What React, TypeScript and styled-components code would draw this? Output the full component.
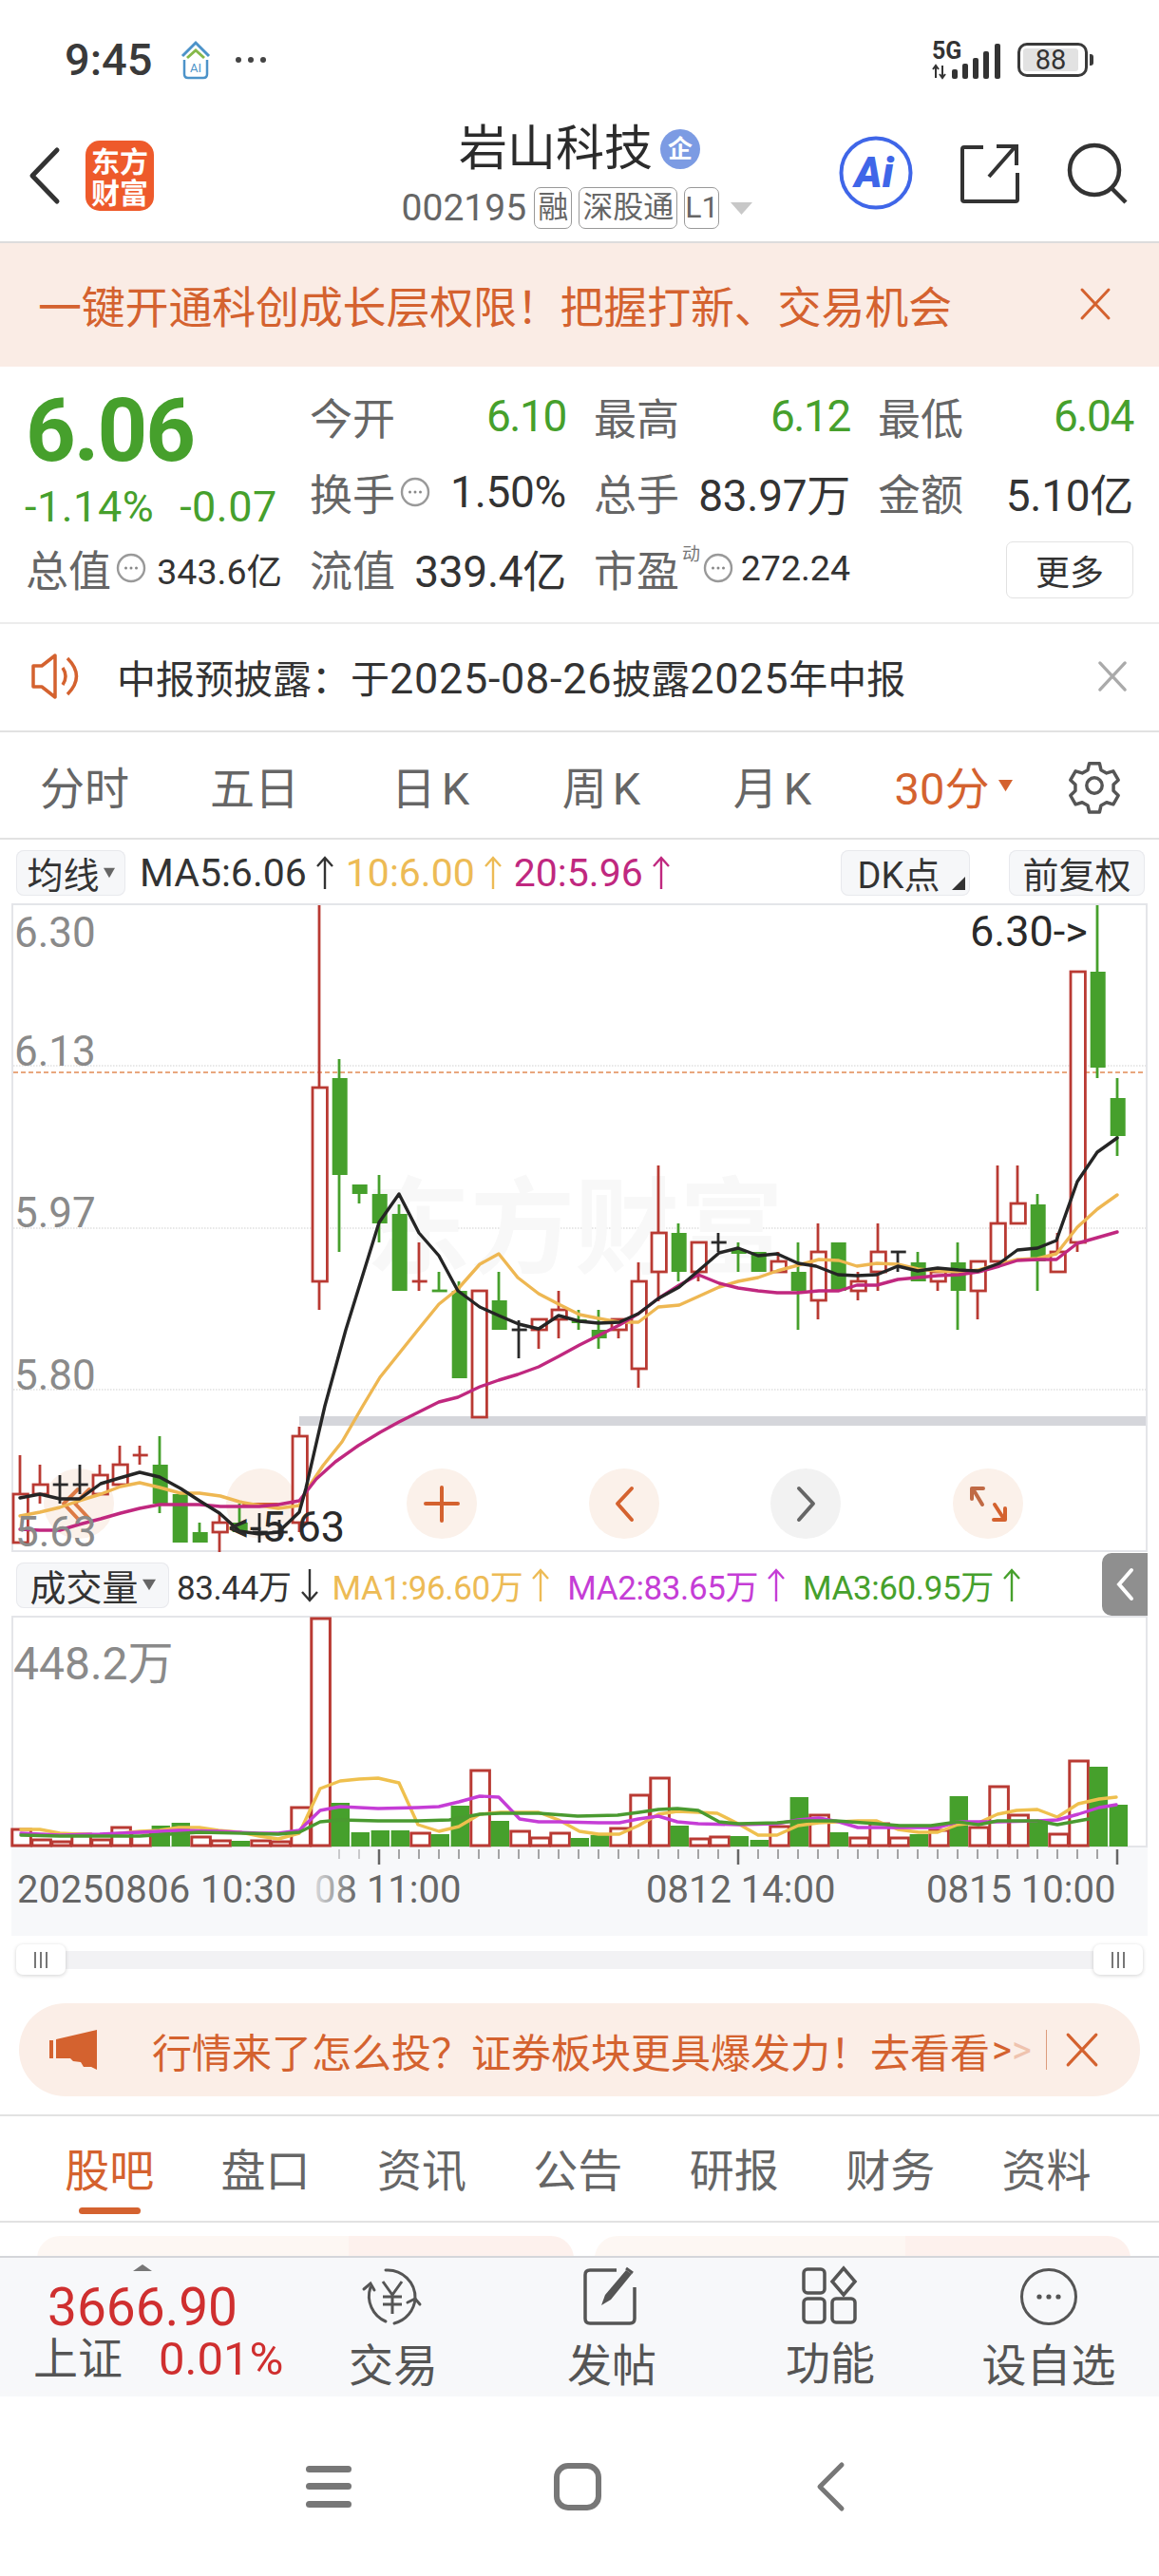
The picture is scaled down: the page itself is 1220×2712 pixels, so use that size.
import React from "react";
import styled, { createGlobalStyle } from "styled-components";

const ORANGE = "#d4622f";
const GREEN = "#46a02c";
const RED = "#b93a33";
const YELLOW = "#edbb55";
const MAGENTA = "#c0287f";
const PURPLE = "#c53dd6";

const GlobalStyle = createGlobalStyle`
  html, body {
    margin: 0;
    padding: 0;
    background: #fff;
    font-family: Roboto, "Noto Sans CJK SC", sans-serif;
  }
  * { box-sizing: border-box; }
  svg { overflow: visible; }
`;

const Page = styled.div`
  width: 1220px;
  height: 2712px;
  overflow: hidden;
  background: #fff;
  color: #333;
`;

/* status bar */
const StatusBar = styled.div`
  height: 125px;
  display: flex;
  align-items: center;
  padding: 0 75px 0 68px;
`;
const Clock = styled.span`
  font-size: 47px;
  font-weight: 500;
  line-height: 1;
  color: #3a3a3a;
  margin-right: 27px;
`;
const StatusDots = styled.svg`
  margin-left: 23px;
`;
const StatusRight = styled.div`
  margin-left: auto;
  display: flex;
  align-items: center;
  gap: 16px;
`;
const Battery = styled.div`
  width: 74px;
  height: 36px;
  border: 3px solid #3a3a3a;
  border-radius: 10px;
  padding: 3px;
  position: relative;
  &::after {
    content: "";
    position: absolute;
    right: -9px;
    top: 9px;
    width: 4px;
    height: 12px;
    border-radius: 0 3px 3px 0;
    background: #3a3a3a;
  }
`;
const BatteryFill = styled.div`
  width: 58px;
  height: 24px;
  border-radius: 3px;
  background: #e2e2e2;
  font-size: 29px;
  line-height: 24px;
  text-align: center;
  color: #333;
`;

/* header */
const Header = styled.header`
  height: 131px;
  display: grid;
  grid-template-columns: 1fr auto 1fr;
  border-bottom: 2px solid #dcdcdc;
`;
const HeaderLeft = styled.div`
  display: flex;
  align-items: center;
  gap: 26px;
  padding: 0 0 9px 30px;
`;
const Logo = styled.div`
  width: 72px;
  height: 74px;
  border-radius: 15px;
  background: #ee5a2b;
  color: #fff;
  font-size: 30px;
  font-weight: 700;
  line-height: 33px;
  text-align: center;
  padding-top: 4px;
  font-family: "Noto Sans CJK SC", sans-serif;
`;
const HeaderCenter = styled.div`
  display: flex;
  flex-direction: column;
  align-items: center;
  padding-top: 6px;
`;
const TitleRow = styled.div`
  display: flex;
  align-items: center;
  gap: 8px;
  height: 52px;
`;
const Title = styled.h1`
  margin: 0;
  font-size: 51px;
  font-weight: 400;
  line-height: 52px;
  color: #2b2b2b;
`;
const TitleBadge = styled.span`
  width: 42px;
  height: 42px;
  border-radius: 50%;
  background: #7c9be3;
  color: #fff;
  font-size: 26px;
  font-weight: 700;
  line-height: 42px;
  text-align: center;
`;
const SubRow = styled.div`
  display: flex;
  align-items: center;
  gap: 7px;
  margin-top: 14px;
  height: 44px;
  padding-right: 5px;
  & > svg {
    margin-left: 5px;
  }
`;
const StockCode = styled.span`
  font-size: 39px;
  color: #666;
  margin-right: 1px;
`;
const Tag = styled.span<{ $tight?: boolean }>`
  height: 44px;
  padding: 0 ${(p) => (p.$tight ? 0 : 3)}px;
  border: 1px solid #999;
  border-radius: 7px;
  font-size: 32px;
  line-height: 40px;
  color: #666;
`;
const HeaderRight = styled.div`
  display: flex;
  align-items: center;
  justify-content: flex-end;
  gap: 50px;
  padding: 0 33px 15px 0;
`;

/* top promo */
const TopBanner = styled.div`
  height: 130px;
  background: #faece5;
  display: flex;
  align-items: center;
  justify-content: space-between;
  padding: 0 50px 2px 40px;
  color: ${ORANGE};
  font-size: 46px;
  letter-spacing: -0.2px;
`;

/* quote */
const Quote = styled.section`
  height: 271px;
  padding: 12px 0 0 28px;
  border-bottom: 2px solid #ececec;
  display: grid;
  grid-template-columns: 269px 269px 269px 268px;
  grid-auto-rows: 80px;
  column-gap: 30px;
`;
const PriceBox = styled.div`
  grid-row: span 2;
  padding-top: 8px;
`;
const Price = styled.div`
  font-size: 92px;
  font-weight: 700;
  line-height: 96px;
  color: ${GREEN};
  letter-spacing: -2px;
  margin-left: -1px;
`;
const PriceChange = styled.div`
  display: flex;
  gap: 27px;
  margin: 7px 0 0 -2px;
  font-size: 45px;
  line-height: 50px;
  letter-spacing: 0.5px;
  color: ${GREEN};
`;
const StatCell = styled.div`
  display: flex;
  align-items: center;
  justify-content: space-between;
`;
const StatLabel = styled.span`
  font-size: 45px;
  margin-left: -1px;
  color: #666;
  white-space: nowrap;
`;
const StatValue = styled.span<{ $green?: boolean; $small?: boolean }>`
  font-size: ${(p) => (p.$small ? 37.5 : 46)}px;
  letter-spacing: ${(p) => (p.$green ? -1.4 : p.$small ? 0 : -0.3)}px;
  color: ${(p) => (p.$green ? GREEN : "#333")};
  white-space: nowrap;
`;
const LabelGroup = styled.span`
  display: flex;
  align-items: center;
  gap: 5px;
`;
const Sup = styled.sup`
  font-size: 19px;
  color: #777;
  margin: -34px -2px 0 -2px;
`;
const MoreButton = styled.button`
  margin: 4px 0 0 auto;
  width: 134px;
  height: 60px;
  border: 1px solid #e2e2e2;
  border-radius: 7px;
  background: #fff;
  color: #333;
  font-family: inherit;
  font-size: 36px;
  padding: 0;
`;

/* notice */
const Notice = styled.div`
  height: 114px;
  display: flex;
  align-items: center;
  padding: 0 33px 3px;
  gap: 36px;
  border-bottom: 2px solid #e2e2e2;
  font-size: 41px;
  color: #333;
`;
const NoticeNum = styled.span`
  font-size: 45px;
  letter-spacing: 0.7px;
`;
const NoticeClose = styled.span`
  margin-left: auto;
  display: flex;
`;

/* period tabs */
const Periods = styled.nav`
  height: 113px;
  display: grid;
  grid-template-columns: 178px 180px 190px 170px 190px 192px 1fr;
  align-items: center;
  border-bottom: 2px solid #e2e2e2;
`;
const Period = styled.span<{ $active?: boolean }>`
  font-size: 47px;
  text-align: center;
  color: ${(p) => (p.$active ? ORANGE : "#666")};
  white-space: nowrap;
  display: flex;
  align-items: center;
  justify-content: center;
  gap: 10px;
`;
const PeriodLatin = styled.span`
  margin-left: 6px;
`;
const GearCell = styled.span`
  display: flex;
  justify-content: flex-end;
  padding-right: 40px;
`;

/* indicator rows */
const IndicatorRow = styled.div`
  height: 67px;
  display: flex;
  align-items: center;
  padding: 2px 15px 0 17px;
  position: relative;
`;
const IndicatorButton = styled.span<{ $w: number; $inset?: number }>`
  position: relative;
  width: ${(p) => p.$w}px;
  height: 48px;
  flex: none;
  display: flex;
  align-items: center;
  justify-content: center;
  gap: 4px;
  padding-right: ${(p) => p.$inset ?? 0}px;
  border-radius: 8px;
  background: #f6f7f9;
  box-shadow: inset 0 0 0 1px #e8e9ed;
  font-size: 38px;
  color: #333;
`;
const CornerMark = styled.i`
  position: absolute;
  right: 5px;
  bottom: 6px;
  border-left: 14px solid transparent;
  border-bottom: 14px solid #333;
`;
const MaText = styled.span<{ $color: string; $size: number; $gap: number }>`
  display: flex;
  align-items: center;
  gap: 9px;
  margin-left: ${(p) => p.$gap}px;
  font-size: ${(p) => p.$size}px;
  letter-spacing: ${(p) => (p.$size < 38 ? -0.4 : 0)}px;
  color: ${(p) => p.$color};
  white-space: nowrap;
`;
const RightButtons = styled.div`
  margin-left: auto;
  display: flex;
  gap: 41px;
`;
const CollapseTab = styled.span`
  position: absolute;
  right: 12px;
  top: 1px;
  width: 48px;
  height: 66px;
  border-radius: 10px 0 0 10px;
  background: #8f8f8f;
  display: flex;
  align-items: center;
  justify-content: center;
`;

/* charts */
const ChartFrame = styled.div<{ $h: number }>`
  height: ${(p) => p.$h}px;
  margin: 0 12px;
  border: 2px solid #e4e5e9;
`;
const VolumeFrame = styled(ChartFrame)`
  border-bottom: none;
`;
const ChartSvg = styled.svg`
  display: block;
  width: 100%;
  height: 100%;
  font-family: Roboto, "Noto Sans CJK SC", sans-serif;
`;
const AxisStrip = styled.div`
  height: 93px;
  margin: 0 12px;
  background: #f7f8fa;
`;

/* range slider */
const RangeRow = styled.div`
  height: 50px;
  padding: 0 17px;
  display: flex;
  align-items: center;
`;
const RangeTrack = styled.div`
  width: 100%;
  height: 19px;
  background: #f2f2f4;
  border-radius: 6px;
  display: flex;
  align-items: center;
  justify-content: space-between;
`;
const RangeHandle = styled.span`
  width: 52px;
  height: 32px;
  flex: none;
  border-radius: 7px;
  background: #fff;
  box-shadow: 0 1px 4px rgba(0, 0, 0, 0.18);
  display: flex;
  align-items: center;
  justify-content: center;
  gap: 4px;
`;
const HandleLine = styled.i`
  width: 2px;
  height: 17px;
  background: #777;
`;

/* lower promo */
const Promo = styled.div`
  height: 98px;
  margin: 21px 20px 19px;
  border-radius: 49px;
  background: #fbeee7;
  display: flex;
  align-items: center;
  padding: 0 43px 0 32px;
  color: ${ORANGE};
  font-size: 42px;
  white-space: nowrap;
`;
const PromoText = styled.span`
  margin-left: 58px;
`;
const PromoChevrons = styled.span`
  font-size: 40px;
  margin-left: 2px;
  & > b {
    font-weight: 400;
    opacity: 0.3;
  }
`;
const PromoClose = styled.span`
  margin-left: auto;
  height: 42px;
  padding-left: 19px;
  border-left: 1px solid #dc9c7c;
  display: flex;
  align-items: center;
`;

/* content tabs */
const ContentTabs = styled.nav`
  height: 114px;
  border-top: 2px solid #e2e2e2;
  border-bottom: 2px solid #e2e2e2;
  padding: 0 0 3px 33px;
  display: grid;
  grid-template-columns: repeat(7, 164.4px);
  align-items: center;
`;
const ContentTab = styled.span<{ $active?: boolean }>`
  position: relative;
  text-align: center;
  font-size: 47px;
  color: ${(p) => (p.$active ? ORANGE : "#666")};
  ${(p) =>
    p.$active &&
    `&::after {
      content: "";
      position: absolute;
      left: 50px;
      bottom: -15px;
      width: 65px;
      height: 7px;
      border-radius: 4px;
      background: ${ORANGE};
    }`}
`;
const CardPeek = styled.div`
  height: 35px;
  padding: 14px 30px 0 39px;
  display: grid;
  grid-template-columns: 565px 564px;
  column-gap: 22px;
  overflow: hidden;
`;
const PeekCard = styled.div`
  height: 60px;
  border-radius: 24px 24px 0 0;
  background: linear-gradient(90deg, #fdf7f3 58%, #fdf1ed 58%);
`;

/* bottom bar */
const BottomBar = styled.footer`
  height: 148px;
  border-top: 2px solid #d4d6da;
  background: #f7f8fa;
  display: grid;
  grid-template-columns: 300px repeat(4, 230px);
`;
const IndexBox = styled.div`
  padding: 8px 0 0 35px;
  position: relative;
  &::before {
    content: "";
    position: absolute;
    left: 140px;
    top: 7px;
    border-left: 10px solid transparent;
    border-right: 10px solid transparent;
    border-bottom: 7px solid #777;
  }
`;
const IndexValue = styled.div`
  font-size: 55px;
  line-height: 54px;
  color: #cf2f2f;
  margin: 17px 0 0 15px;
`;
const IndexRow = styled.div`
  display: flex;
  align-items: baseline;
  gap: 38px;
  line-height: 52px;
  margin-top: 2px;
`;
const IndexName = styled.span`
  font-size: 47px;
  color: #555;
`;
const IndexPct = styled.span`
  font-size: 49px;
  color: #cf2f2f;
`;
const BottomItem = styled.div`
  display: flex;
  flex-direction: column;
  align-items: center;
  padding: 9px 2px 0 0;
  font-size: 47px;
  line-height: 58px;
  color: #555;
  & > svg {
    margin-bottom: 12px;
  }
`;

/* system nav */
const SystemNav = styled.div`
  height: 190px;
  display: flex;
  align-items: center;
  padding-left: 322px;
  & > svg:nth-child(2) {
    margin-left: 213px;
  }
  & > svg:nth-child(3) {
    margin-left: 225px;
  }
`;

/* ---------- chart data ---------- */
type Candle = ["r" | "g" | "k", number, number, number, number];
const candles: Candle[] = [
  ["r", 1532, 1573, 1624, 1624],
  ["r", 1542, 1563, 1573, 1583],
  ["k", 1553, 1563, 1563, 1583],
  ["k", 1542, 1563, 1563, 1573],
  ["r", 1542, 1553, 1573, 1573],
  ["r", 1522, 1542, 1563, 1563],
  ["r", 1522, 1532, 1532, 1542],
  ["g", 1512, 1542, 1583, 1593],
  ["g", 1573, 1573, 1624, 1624],
  ["g", 1603, 1613, 1624, 1624],
  ["r", 1593, 1603, 1613, 1634],
  ["g", 1583, 1603, 1613, 1613],
  ["k", 1593, 1613, 1613, 1624],
  ["k", 1600, 1613, 1613, 1620],
  ["r", 1502, 1512, 1603, 1613],
  ["r", 953, 1145, 1349, 1379],
  ["g", 1115, 1135, 1237, 1318],
  ["g", 1247, 1247, 1257, 1267],
  ["g", 1237, 1257, 1288, 1308],
  ["g", 1268, 1278, 1359, 1359],
  ["r", 1308, 1349, 1349, 1359],
  ["g", 1339, 1359, 1359, 1359],
  ["g", 1349, 1359, 1451, 1451],
  ["r", 1359, 1359, 1492, 1492],
  ["g", 1339, 1369, 1400, 1400],
  ["k", 1390, 1400, 1400, 1430],
  ["r", 1389, 1389, 1400, 1420],
  ["r", 1359, 1379, 1389, 1409],
  ["g", 1379, 1389, 1393, 1400],
  ["g", 1379, 1400, 1409, 1420],
  ["r", 1389, 1389, 1400, 1409],
  ["r", 1329, 1349, 1441, 1461],
  ["r", 1227, 1298, 1339, 1370],
  ["g", 1288, 1298, 1339, 1349],
  ["r", 1308, 1308, 1339, 1349],
  ["k", 1298, 1308, 1308, 1318],
  ["g", 1308, 1316, 1320, 1339],
  ["g", 1318, 1318, 1339, 1339],
  ["r", 1318, 1328, 1339, 1339],
  ["g", 1308, 1339, 1359, 1400],
  ["r", 1288, 1318, 1369, 1389],
  ["g", 1308, 1308, 1359, 1359],
  ["r", 1339, 1349, 1359, 1369],
  ["r", 1288, 1318, 1339, 1359],
  ["k", 1318, 1318, 1318, 1339],
  ["g", 1318, 1329, 1349, 1349],
  ["r", 1339, 1339, 1349, 1359],
  ["g", 1308, 1329, 1359, 1400],
  ["r", 1328, 1328, 1359, 1389],
  ["r", 1227, 1288, 1328, 1328],
  ["r", 1227, 1267, 1288, 1288],
  ["g", 1257, 1268, 1328, 1359],
  ["r", 1298, 1318, 1339, 1339],
  ["r", 1023, 1023, 1308, 1318],
  ["g", 953, 1023, 1124, 1135],
  ["g", 1135, 1156, 1196, 1217],
];

const ma5 =
  "21,1577 42,1573 63,1578 84,1578 106,1562 126,1556 147,1550 168,1555 190,1567 210,1580 231,1593 252,1612 273,1615 293,1613 315,1592 322,1567 342,1480 364,1400 399,1287 420,1257 441,1298 462,1322 482,1359 505,1376 525,1385 546,1394 567,1399 588,1385 610,1391 630,1393 652,1392 672,1383 693,1367 715,1355 735,1338 757,1319 777,1314 798,1322 818,1320 840,1330 859,1333 882,1342 902,1343 923,1342 945,1333 966,1338 987,1335 1009,1337 1030,1338 1052,1330 1071,1316 1092,1314 1112,1306 1134,1244 1155,1213 1176,1198";
const ma10 =
  "21,1596 42,1592 63,1587 83,1580 106,1573 127,1565 147,1561 168,1566 190,1572 210,1572 232,1575 252,1581 273,1585 293,1588 315,1585 322,1570 340,1543 360,1518 382,1480 400,1450 420,1425 440,1400 462,1373 482,1357 505,1331 525,1320 545,1345 567,1362 588,1373 610,1384 630,1388 652,1392 672,1392 693,1376 715,1374 735,1365 757,1355 777,1349 798,1345 818,1338 840,1332 862,1326 883,1327 902,1333 923,1330 945,1331 966,1336 987,1338 1009,1339 1030,1337 1052,1331 1071,1326 1092,1325 1112,1320 1134,1292 1155,1273 1176,1258";
const ma20 =
  "21,1610 42,1611 63,1611 83,1605 106,1599 127,1593 147,1588 168,1584 190,1584 210,1584 232,1586 252,1586 273,1586 293,1584 315,1580 333,1557 353,1539 377,1522 400,1508 420,1497 440,1487 462,1476 482,1471 505,1460 525,1453 545,1447 567,1439 588,1428 610,1416 630,1406 652,1395 672,1383 693,1367 715,1353 735,1342 757,1351 777,1356 798,1359 818,1361 840,1361 862,1359 883,1359 902,1353 923,1353 945,1347 966,1345 987,1343 1009,1342 1030,1339 1052,1333 1071,1327 1092,1326 1112,1326 1134,1309 1155,1303 1176,1297";

const volumes: ["r" | "g", number][] = [
  ["r", 1925], ["r", 1936], ["r", 1938], ["r", 1930], ["r", 1936], ["r", 1923], ["r", 1928], ["g", 1922],
  ["g", 1919], ["r", 1933], ["r", 1937], ["g", 1938], ["r", 1937], ["r", 1938], ["r", 1902], ["r", 1703],
  ["g", 1898], ["g", 1929], ["g", 1927], ["g", 1927], ["r", 1929], ["g", 1931], ["g", 1901], ["r", 1863],
  ["g", 1917], ["r", 1927], ["r", 1934], ["r", 1929], ["g", 1935], ["g", 1932], ["r", 1924], ["r", 1889],
  ["r", 1871], ["g", 1922], ["r", 1935], ["r", 1933], ["g", 1933], ["g", 1937], ["r", 1922], ["g", 1892],
  ["r", 1910], ["g", 1929], ["r", 1934], ["r", 1919], ["r", 1934], ["g", 1931], ["r", 1926], ["g", 1891],
  ["r", 1923], ["r", 1880], ["r", 1910], ["g", 1916], ["r", 1930], ["r", 1853], ["g", 1860], ["g", 1900],
];

const vol1 =
  "22,1926 42,1926 63,1930 83,1931 105,1932 127,1930 147,1928 168,1927 188,1924 210,1924 230,1927 252,1929 273,1933 293,1936 315,1930 337,1883 358,1875 378,1873 398,1872 420,1877 440,1921 462,1928 483,1923 505,1910 527,1908 547,1908 567,1908 588,1916 610,1928 630,1931 652,1931 672,1922 693,1910 713,1907 735,1908 755,1909 777,1920 798,1932 818,1932 840,1922 862,1919 883,1918 903,1917 923,1917 945,1926 967,1929 987,1929 1008,1921 1030,1919 1050,1910 1070,1906 1092,1905 1113,1913 1135,1899 1157,1894 1175,1892";
const vol2 =
  "22,1930 63,1932 105,1931 147,1929 188,1927 230,1928 273,1930 293,1930 315,1927 337,1906 358,1902 398,1904 440,1903 462,1902 483,1897 505,1891 525,1892 547,1915 567,1918 588,1918 630,1919 652,1919 672,1915 693,1912 713,1918 735,1920 777,1921 818,1920 840,1916 862,1914 883,1918 903,1924 945,1924 967,1924 987,1924 1008,1918 1050,1918 1092,1917 1113,1916 1135,1910 1157,1903 1175,1900";
const vol3 =
  "22,1932 63,1933 147,1933 210,1929 293,1931 315,1929 337,1918 358,1916 398,1917 440,1917 473,1916 505,1910 527,1909 567,1909 608,1912 650,1911 673,1908 693,1905 713,1904 735,1906 757,1918 777,1920 818,1919 840,1917 880,1917 923,1920 947,1922 980,1922 1008,1918 1030,1921 1050,1917 1092,1917 1113,1921 1146,1915";

const candleX = (i: number) => 21.7 + 21 * i;
const volX = (i: number) => 22.3 + 21 * i;

const Line = ({ points, color, width }: { points: string; color: string; width: number }) => (
  <polyline points={points} fill="none" stroke={color} strokeWidth={width} strokeLinejoin="round" strokeLinecap="round" />
);

const CandleMark = ({ c, i }: { c: Candle; i: number }) => {
  const [kind, high, top, bottom, low] = c;
  const x = candleX(i);
  const stroke = kind === "r" ? RED : kind === "g" ? GREEN : "#2a2a2a";
  const flat = top === bottom;
  return (
    <g stroke={stroke} strokeWidth={2.8}>
      {high < top && <line x1={x - 0.7} x2={x - 0.7} y1={high} y2={top} />}
      {low > bottom && <line x1={x - 0.7} x2={x - 0.7} y1={bottom} y2={low} />}
      {flat ? (
        <line x1={x - 8} x2={x + 8} y1={top} y2={top} />
      ) : kind === "g" ? (
        <rect x={x - 8} y={top} width={16} height={bottom - top} fill={GREEN} stroke="none" />
      ) : (
        <rect x={x - 7.7} y={top} width={15.4} height={bottom - top} fill="#fff" />
      )}
    </g>
  );
};

const ChevronPath = ({ d, color, width = 4 }: { d: string; color: string; width?: number }) => (
  <path d={d} fill="none" stroke={color} strokeWidth={width} strokeLinecap="round" strokeLinejoin="round" />
);

const PriceChart = () => (
  <ChartSvg viewBox="14 953 1192 679">
    {[1122, 1293, 1463].map((y) => (
      <line key={y} x1={14} x2={1206} y1={y} y2={y} stroke="#cfcfcf" strokeWidth={1} strokeDasharray="1.5 1.5" />
    ))}
    <line x1={14} x2={1206} y1={1129} y2={1129} stroke="#e9a77e" strokeWidth={2} strokeDasharray="5 3" />
    <text x={385} y={1332} fontSize={110} fontWeight={700} fill="#f8f8f8" fontFamily='"Noto Sans CJK SC", sans-serif'>
      东方财富
    </text>
    <rect x={315} y={1491} width={891} height={10} fill="#d5d6db" />
    {[83, 275, 465, 657, 848, 1040].map((cx, k) => (
      <circle key={cx} cx={cx} cy={1583} r={37} fill={k === 4 ? "#f2f2f2" : "#fbf1ea"} />
    ))}
    <ChevronPath d="M82 1568 L67 1583 L82 1599 M94 1568 L79 1583 L94 1599" color="#dd7a45" />
    <ChevronPath d="M257 1584 H292" color={ORANGE} />
    <ChevronPath d="M448 1583 H482 M465 1566 V1601" color={ORANGE} />
    <ChevronPath d="M665 1567 L650 1583 L665 1600" color={ORANGE} />
    <ChevronPath d="M841 1567 L856 1583 L841 1600" color="#666" />
    <ChevronPath d="M1025 1569 L1034 1584 M1023 1578 V1567 H1035" color="#c06a45" />
    <ChevronPath d="M1047 1584 L1056 1598 M1058 1588 V1600 H1046" color={ORANGE} />
    {candles.map((c, i) => (
      <CandleMark key={i} c={c} i={i} />
    ))}
    <Line points={ma10} color="#eeb752" width={3.4} />
    <Line points={ma20} color={MAGENTA} width={3.4} />
    <Line points={ma5} color="#252525" width={3.4} />
    <g fontSize={44} fill="#8a8a8a">
      <text x={15} y={997}>6.30</text>
      <text x={15} y={1122}>6.13</text>
      <text x={15} y={1292}>5.97</text>
      <text x={15} y={1463}>5.80</text>
      <text x={16} y={1628}>5.63</text>
    </g>
    <g fontSize={45} fill="#2a2a2a">
      <text x={1021} y={996}>6.30-&gt;</text>
      <text x={240} y={1623}>&lt;-5.63</text>
    </g>
  </ChartSvg>
);

const VolumeChart = () => (
  <ChartSvg viewBox="14 1703 1192 242">
    <rect x={14} y={1943} width={1192} height={2} fill="#e4e5e9" />
    {volumes.map(([kind, top], i) =>
      kind === "g" ? (
        <rect key={i} x={volX(i) - 9.7} y={top} width={19.4} height={1944 - top} fill={GREEN} />
      ) : (
        <rect key={i} x={volX(i) - 9.5} y={top + 1} width={19.6} height={1943 - top - 1} fill="#fff" stroke={RED} strokeWidth={3} />
      ),
    )}
    <Line points={vol1} color="#efc04e" width={3.4} />
    <Line points={vol2} color={PURPLE} width={3.4} />
    <Line points={vol3} color="#4a9a30" width={3.4} />
    <text x={14} y={1768} fontSize={48} fill="#8a8a8a">
      448.2万
    </text>
  </ChartSvg>
);

const AxisChart = () => (
  <ChartSvg viewBox="12 1945 1196 93">
    <defs>
      <linearGradient id="axisFade" x1="0" x2="1" y1="0" y2="0">
        <stop offset="0" stopColor="#f7f8fa" stopOpacity={0.85} />
        <stop offset="1" stopColor="#f7f8fa" stopOpacity={0} />
      </linearGradient>
    </defs>
    {candles.map((_, i) => {
      if (i < 16) return null;
      const big = i === 18 || i === 36 || i === 55;
      const x = 21 + 21 * i;
      return (
        <line
          key={i}
          x1={x}
          x2={x}
          y1={1947}
          y2={big ? 1963 : 1957}
          stroke={big ? "#666" : "#888"}
          strokeWidth={big ? 2.5 : 1.5}
          opacity={i < 18 ? 0.55 : 1}
        />
      );
    })}
    <g fontSize={40} fill="#666">
      <text x={18} y={2003} letterSpacing={0.35}>20250806 10:30</text>
      <text x={331} y={2003}>08 11:00</text>
      <rect x={328} y={1970} width={48} height={40} fill="url(#axisFade)" />
      <text x={680} y={2003}>0812 14:00</text>
      <text x={975} y={2003}>0815 10:00</text>
    </g>
  </ChartSvg>
);

/* ---------- icons ---------- */
const DotCircle = ({ size = 32 }: { size?: number }) => (
  <svg width={size} height={size} viewBox="0 0 32 32">
    <circle cx={16} cy={16} r={14} fill="none" stroke="#999" strokeWidth={2.4} />
    <circle cx={10.5} cy={16} r={1.5} fill="#888" />
    <circle cx={16} cy={16} r={1.5} fill="#888" />
    <circle cx={21.5} cy={16} r={1.5} fill="#888" />
  </svg>
);

const CloseX = ({ color, size = 34, width = 3 }: { color: string; size?: number; width?: number }) => (
  <svg width={size} height={size} viewBox="0 0 34 34">
    <path d="M3 2 L31 32 M31 2 L3 32" stroke={color} strokeWidth={width} fill="none" strokeLinecap="round" />
  </svg>
);

const ThinArrow = ({ color, down }: { color: string; down?: boolean }) => (
  <svg width={20} height={38} viewBox="0 0 20 38">
    <path d={down ? "M10 2 V35 M2 26 L10 35 L18 26" : "M10 36 V3 M2 12 L10 3 L18 12"} stroke={color} strokeWidth={2.4} fill="none" />
  </svg>
);

const Caret = ({ color, w = 14, h = 16 }: { color: string; w?: number; h?: number }) => (
  <svg width={w} height={h} viewBox="0 0 14 16" preserveAspectRatio="none">
    <path d="M0 1 H14 L7 15 Z" fill={color} />
  </svg>
);

const HomeAiIcon = () => (
  <svg width={36} height={42} viewBox="0 0 36 42">
    <path d="M4 17 L18 3 L32 17" fill="none" stroke="#4c93c9" strokeWidth={3} />
    <path d="M9 19 L18 11 L27 19" fill="none" stroke="#86b94a" strokeWidth={3} />
    <path d="M6 21 V36 Q6 40 10 40 H26 Q30 40 30 36 V21" fill="none" stroke="#4c93c9" strokeWidth={2.5} />
    <text x={18} y={34} fontSize={13} fill="#4c93c9" textAnchor="middle" fontFamily="Roboto, sans-serif">
      AI
    </text>
  </svg>
);

const SignalIcon = () => (
  <svg width={74} height={40} viewBox="0 0 74 40">
    <text x={0} y={19} fontSize={25} fontWeight={700} fill="#333" fontFamily="Roboto, sans-serif">
      5G
    </text>
    <path d="M4 39 V26 M1 30 L4 26 L7 30 M11 26 V39 M8 35 L11 39 L14 35" stroke="#333" strokeWidth={2} fill="none" />
    {[
      [21, 30],
      [32, 24],
      [43, 18],
      [54, 11],
      [66, 3],
    ].map(([x, y]) => (
      <rect key={x} x={x} y={y} width={6} height={40 - y} rx={2} fill="#333" />
    ))}
  </svg>
);

const BackIcon = () => (
  <svg width={34} height={60} viewBox="0 0 34 60">
    <path d="M30 3 L4 30 L30 57" fill="none" stroke="#333" strokeWidth={5} strokeLinecap="round" strokeLinejoin="round" />
  </svg>
);

const AiIcon = () => (
  <svg width={78} height={80} viewBox="0 0 78 80">
    <circle cx={39} cy={40} r={36.5} fill="#fff" stroke="#3f66e8" strokeWidth={4} />
    <text x={37} y={55} fontSize={44} fontWeight={900} fontStyle="italic" fill="#3f66e8" textAnchor="middle" fontFamily="Roboto, sans-serif">
      Ai
    </text>
  </svg>
);

const ShareIcon = () => (
  <svg width={62} height={64} viewBox="0 0 62 64">
    <path d="M24 5 H4 Q2 5 2 7 V60 Q2 62 4 62 H58 Q60 62 60 60 V32" fill="none" stroke="#333" strokeWidth={4} />
    <path d="M30 36 L58 4 M38 4 H59 V24" fill="none" stroke="#333" strokeWidth={4} />
  </svg>
);

const SearchIcon = () => (
  <svg width={64} height={64} viewBox="0 0 64 64">
    <circle cx={29} cy={29} r={26} fill="none" stroke="#333" strokeWidth={4.5} />
    <path d="M47 48 L62 63" stroke="#333" strokeWidth={4.5} />
  </svg>
);

const SpeakerIcon = () => (
  <svg width={54} height={48} viewBox="0 0 54 48">
    <path d="M25 2 L11 13 H2 V35 H11 L25 46 Z" fill="none" stroke={ORANGE} strokeWidth={3.5} strokeLinejoin="round" />
    <path d="M33 15 Q39 24 33 33" fill="none" stroke={ORANGE} strokeWidth={3.5} />
    <path d="M38 5 Q57 24 38 43" fill="none" stroke={ORANGE} strokeWidth={3.5} />
  </svg>
);

const GearIcon = () => (
  <svg width={56} height={58} viewBox="0 0 24 24" fill="none" stroke="#555" strokeWidth={1.5} strokeLinejoin="round">
    <path d="M9.7 2 h4.6 l.7 3 2.5 1.4 3-.9 2.3 4-2.2 2.1 v2.8 l2.2 2.1 -2.3 4 -3-.9 -2.5 1.4 -.7 3 H9.7 l-.7-3 -2.5-1.4 -3 .9 -2.3-4 2.2-2.1 v-2.8 L1.2 9.5 l2.3-4 3 .9 L9 5 Z" />
    <circle cx={12} cy={12} r={3.5} />
  </svg>
);

const CollapseChevron = () => (
  <svg width={20} height={36} viewBox="0 0 20 36">
    <path d="M17 3 L4 18 L17 33" fill="none" stroke="#fff" strokeWidth={4} strokeLinecap="round" />
  </svg>
);

const MegaphoneIcon = () => (
  <svg width={50} height={42} viewBox="0 0 50 42">
    <path d="M0 11 H4 V30 H0 Z M7 10 L50 0 V42 L44 39 L36 39 L33 34 L25 33 L22 30 H7 Z" fill={ORANGE} />
  </svg>
);

const TradeIcon = () => (
  <svg width={70} height={64} viewBox="0 0 70 64" fill="none" stroke="#555" strokeWidth={3}>
    <path d="M11 22 A29 29 0 0 0 27 58 M27 4 A29 29 0 0 1 58 34 A29 29 0 0 1 36 60" strokeLinecap="round" />
    <path d="M4 24 L11 18 L15 25 M50 38 L58 34 L63 40" strokeLinecap="round" />
    <path d="M24 16 L34 30 L44 16 M24 32 H44 M24 40 H44 M34 30 V50" strokeWidth={3} />
  </svg>
);

const PostIcon = () => (
  <svg width={62} height={64} viewBox="0 0 62 64" fill="none" stroke="#555" strokeWidth={3.5}>
    <path d="M36 4 H8 Q3 4 3 9 V55 Q3 60 8 60 H50 Q55 60 55 55 V22" />
    <path d="M20 41 L24 30 L46 4 L52 8 L30 35 Z" fill="#555" stroke="none" />
    <path d="M46 2 L53 7" strokeWidth={3} />
  </svg>
);

const GridIcon = () => (
  <svg width={62} height={62} viewBox="0 0 62 62" fill="none" stroke="#555" strokeWidth={3.5}>
    <rect x={3} y={3} width={22} height={25} rx={4} />
    <path d="M45 2 L57 16 L45 30 L33 16 Z" />
    <rect x={3} y={34} width={22} height={25} rx={4} />
    <rect x={33} y={34} width={24} height={25} rx={4} />
  </svg>
);

const MoreIcon = () => (
  <svg width={62} height={64} viewBox="0 0 62 64">
    <circle cx={31} cy={32} r={28.5} fill="none" stroke="#555" strokeWidth={3} />
    <circle cx={21} cy={32} r={2.6} fill="#555" />
    <circle cx={31} cy={32} r={2.6} fill="#555" />
    <circle cx={41} cy={32} r={2.6} fill="#555" />
  </svg>
);

const MenuGlyph = () => (
  <svg width={48} height={44} viewBox="0 0 48 44">
    <rect x={0} y={0} width={48} height={7} rx={3.5} fill="#777" />
    <rect x={0} y={18} width={48} height={7} rx={3.5} fill="#777" />
    <rect x={0} y={37} width={48} height={7} rx={3.5} fill="#777" />
  </svg>
);

const HomeGlyph = () => (
  <svg width={50} height={50} viewBox="0 0 50 50">
    <rect x={3} y={3} width={44} height={44} rx={12} fill="none" stroke="#777" strokeWidth={6} />
  </svg>
);

const BackGlyph = () => (
  <svg width={32} height={52} viewBox="0 0 32 52">
    <path d="M28 3 L5 26 L28 49" fill="none" stroke="#777" strokeWidth={5} strokeLinecap="round" strokeLinejoin="round" />
  </svg>
);

export default function App() {
  return (
    <Page>
      <GlobalStyle />
      <StatusBar>
        <Clock>9:45</Clock>
        <HomeAiIcon />
        <StatusDots width={36} height={8} viewBox="0 0 36 8">
          <circle cx={4} cy={4} r={3} fill="#444" />
          <circle cx={17} cy={4} r={3} fill="#444" />
          <circle cx={30} cy={4} r={3} fill="#444" />
        </StatusDots>
        <StatusRight>
          <SignalIcon />
          <Battery>
            <BatteryFill>88</BatteryFill>
          </Battery>
        </StatusRight>
      </StatusBar>

      <Header>
        <HeaderLeft>
          <BackIcon />
          <Logo>
            东方
            <br />
            财富
          </Logo>
        </HeaderLeft>
        <HeaderCenter>
          <TitleRow>
            <Title>岩山科技</Title>
            <TitleBadge>企</TitleBadge>
          </TitleRow>
          <SubRow>
            <StockCode>002195</StockCode>
            <Tag>融</Tag>
            <Tag>深股通</Tag>
            <Tag $tight>L1</Tag>
            <Caret color="#c8c8c8" w={23} h={15} />
          </SubRow>
        </HeaderCenter>
        <HeaderRight>
          <AiIcon />
          <ShareIcon />
          <SearchIcon />
        </HeaderRight>
      </Header>

      <TopBanner>
        <span>一键开通科创成长层权限！把握打新、交易机会</span>
        <CloseX color={ORANGE} />
      </TopBanner>

      <Quote>
        <PriceBox>
          <Price>6.06</Price>
          <PriceChange>
            <span>-1.14%</span>
            <span>-0.07</span>
          </PriceChange>
        </PriceBox>
        <StatCell>
          <StatLabel>今开</StatLabel>
          <StatValue $green>6.10</StatValue>
        </StatCell>
        <StatCell>
          <StatLabel>最高</StatLabel>
          <StatValue $green>6.12</StatValue>
        </StatCell>
        <StatCell>
          <StatLabel>最低</StatLabel>
          <StatValue $green>6.04</StatValue>
        </StatCell>
        <StatCell>
          <LabelGroup>
            <StatLabel>换手</StatLabel>
            <DotCircle />
          </LabelGroup>
          <StatValue>1.50%</StatValue>
        </StatCell>
        <StatCell>
          <StatLabel>总手</StatLabel>
          <StatValue>83.97万</StatValue>
        </StatCell>
        <StatCell>
          <StatLabel>金额</StatLabel>
          <StatValue>5.10亿</StatValue>
        </StatCell>
        <StatCell>
          <LabelGroup>
            <StatLabel>总值</StatLabel>
            <DotCircle />
          </LabelGroup>
          <StatValue $small>343.6亿</StatValue>
        </StatCell>
        <StatCell>
          <StatLabel>流值</StatLabel>
          <StatValue>339.4亿</StatValue>
        </StatCell>
        <StatCell>
          <LabelGroup>
            <StatLabel>市盈</StatLabel>
            <Sup>动</Sup>
            <DotCircle />
          </LabelGroup>
          <StatValue $small>272.24</StatValue>
        </StatCell>
        <StatCell>
          <MoreButton>更多</MoreButton>
        </StatCell>
      </Quote>

      <Notice>
        <SpeakerIcon />
        <span>
          中报预披露：于<NoticeNum>2025-08-26</NoticeNum>披露<NoticeNum>2025</NoticeNum>年中报
        </span>
        <NoticeClose>
          <CloseX color="#aaa" size={32} width={3.5} />
        </NoticeClose>
      </Notice>

      <Periods>
        <Period>分时</Period>
        <Period>五日</Period>
        <Period>
          <span>
            日<PeriodLatin>K</PeriodLatin>
          </span>
        </Period>
        <Period>
          <span>
            周<PeriodLatin>K</PeriodLatin>
          </span>
        </Period>
        <Period>
          <span>
            月<PeriodLatin>K</PeriodLatin>
          </span>
        </Period>
        <Period $active>
          <span>30分</span>
          <Caret color={ORANGE} w={15} h={14} />
        </Period>
        <GearCell>
          <GearIcon />
        </GearCell>
      </Periods>

      <IndicatorRow>
        <IndicatorButton $w={115}>
          均线
          <Caret color="#666" w={12} h={12} />
        </IndicatorButton>
        <MaText $color="#333" $size={41} $gap={15}>
          MA5:6.06
          <ThinArrow color="#333" />
        </MaText>
        <MaText $color={YELLOW} $size={41} $gap={12}>
          10:6.00
          <ThinArrow color={YELLOW} />
        </MaText>
        <MaText $color={MAGENTA} $size={41} $gap={12}>
          20:5.96
          <ThinArrow color={MAGENTA} />
        </MaText>
        <RightButtons>
          <IndicatorButton $w={136} $inset={14}>
            DK点
            <CornerMark />
          </IndicatorButton>
          <IndicatorButton $w={143}>前复权</IndicatorButton>
        </RightButtons>
      </IndicatorRow>

      <ChartFrame $h={683}>
        <PriceChart />
      </ChartFrame>

      <IndicatorRow>
        <IndicatorButton $w={161}>
          成交量
          <Caret color="#666" w={14} h={13} />
        </IndicatorButton>
        <MaText $color="#333" $size={35} $gap={8}>
          83.44万
          <ThinArrow color="#333" down />
        </MaText>
        <MaText $color={YELLOW} $size={35} $gap={14}>
          MA1:96.60万
          <ThinArrow color={YELLOW} />
        </MaText>
        <MaText $color={PURPLE} $size={35} $gap={18}>
          MA2:83.65万
          <ThinArrow color={PURPLE} />
        </MaText>
        <MaText $color={GREEN} $size={35} $gap={18}>
          MA3:60.95万
          <ThinArrow color={GREEN} />
        </MaText>
        <CollapseTab>
          <CollapseChevron />
        </CollapseTab>
      </IndicatorRow>

      <VolumeFrame $h={244}>
        <VolumeChart />
      </VolumeFrame>
      <AxisStrip>
        <AxisChart />
      </AxisStrip>

      <RangeRow>
        <RangeTrack>
          <RangeHandle>
            <HandleLine />
            <HandleLine />
            <HandleLine />
          </RangeHandle>
          <RangeHandle>
            <HandleLine />
            <HandleLine />
            <HandleLine />
          </RangeHandle>
        </RangeTrack>
      </RangeRow>

      <Promo>
        <MegaphoneIcon />
        <PromoText>行情来了怎么投？证券板块更具爆发力！去看看</PromoText>
        <PromoChevrons>
          &gt;<b>&gt;</b>
        </PromoChevrons>
        <PromoClose>
          <CloseX color={ORANGE} size={36} />
        </PromoClose>
      </Promo>

      <ContentTabs>
        <ContentTab $active>股吧</ContentTab>
        <ContentTab>盘口</ContentTab>
        <ContentTab>资讯</ContentTab>
        <ContentTab>公告</ContentTab>
        <ContentTab>研报</ContentTab>
        <ContentTab>财务</ContentTab>
        <ContentTab>资料</ContentTab>
      </ContentTabs>
      <CardPeek>
        <PeekCard />
        <PeekCard />
      </CardPeek>

      <BottomBar>
        <IndexBox>
          <IndexValue>3666.90</IndexValue>
          <IndexRow>
            <IndexName>上证</IndexName>
            <IndexPct>0.01%</IndexPct>
          </IndexRow>
        </IndexBox>
        <BottomItem>
          <TradeIcon />
          交易
        </BottomItem>
        <BottomItem>
          <PostIcon />
          发帖
        </BottomItem>
        <BottomItem>
          <GridIcon />
          功能
        </BottomItem>
        <BottomItem>
          <MoreIcon />
          设自选
        </BottomItem>
      </BottomBar>

      <SystemNav>
        <MenuGlyph />
        <HomeGlyph />
        <BackGlyph />
      </SystemNav>
    </Page>
  );
}
